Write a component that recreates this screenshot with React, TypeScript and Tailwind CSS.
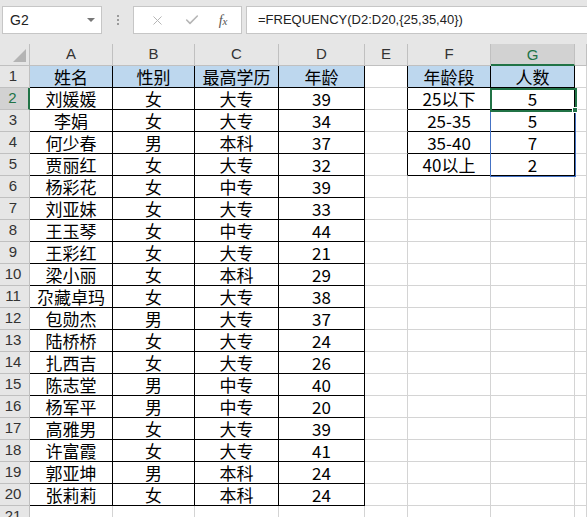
import { X, Check } from 'lucide-react';

const COLS = ['A', 'B', 'C', 'D', 'E', 'F', 'G', ''];

const people: [string, string, string, number][] = [
  ['刘媛媛', '女', '大专', 39],
  ['李娟', '女', '大专', 34],
  ['何少春', '男', '本科', 37],
  ['贾丽红', '女', '大专', 32],
  ['杨彩花', '女', '中专', 39],
  ['刘亚妹', '女', '大专', 33],
  ['王玉琴', '女', '中专', 44],
  ['王彩红', '女', '大专', 21],
  ['梁小丽', '女', '本科', 29],
  ['尕藏卓玛', '女', '大专', 38],
  ['包勋杰', '男', '大专', 37],
  ['陆桥桥', '女', '大专', 24],
  ['扎西吉', '女', '大专', 26],
  ['陈志堂', '男', '中专', 40],
  ['杨军平', '男', '中专', 20],
  ['高雅男', '女', '大专', 39],
  ['许富霞', '女', '大专', 41],
  ['郭亚坤', '男', '本科', 24],
  ['张莉莉', '女', '本科', 24],
];

const bands: [string, string][] = [
  ['年龄段', '人数'],
  ['25以下', '5'],
  ['25-35', '5'],
  ['35-40', '7'],
  ['40以上', '2'],
];

// value of a cell, row 1..21, col 0..7
function cellValue(r: number, c: number): string {
  if (r === 1) {
    if (c === 0) return '姓名';
    if (c === 1) return '性别';
    if (c === 2) return '最高学历';
    if (c === 3) return '年龄';
  } else if (r <= 20 && c <= 3) {
    const p = people[r - 2];
    return String(p[c]);
  }
  if (r <= 5 && (c === 5 || c === 6)) return bands[r - 1][c - 5];
  return '';
}

const inTable = (r: number, c: number) =>
  (r >= 1 && r <= 20 && c >= 0 && c <= 3) || (r >= 1 && r <= 5 && (c === 5 || c === 6));

function Cell({ r, c }: { r: number; c: number }) {
  const right = inTable(r, c) || inTable(r, c + 1);
  const bottom = inTable(r, c) || inTable(r + 1, c);
  const header = r === 1 && inTable(r, c);
  return (
    <div
      className={[
        'flex items-center justify-center h-[22px] border-r border-b text-[17px] leading-[20px] text-black whitespace-nowrap',
        right ? 'border-r-black' : 'border-r-[#d4d4d4]',
        bottom ? 'border-b-black' : 'border-b-[#d4d4d4]',
        header ? 'bg-[#bdd7ee]' : 'bg-white',
      ].join(' ')}
    >
      {cellValue(r, c)}
    </div>
  );
}

function FormulaBar() {
  return (
    <div className="h-[44px] bg-[#e6e6e6] flex items-start pt-[6px] font-['Liberation_Sans',sans-serif]">
      <div className="ml-[2px] w-[100px] h-[28px] bg-white border border-[#c6c6c6] flex items-center justify-between pl-[7px] pr-[6px]">
        <span className="text-[14px] text-[#222]">G2</span>
        <span className="w-0 h-0 border-l-[4px] border-r-[4px] border-t-[4px] border-l-transparent border-r-transparent border-t-[#777]" />
      </div>
      <div className="w-[31px] h-[28px] flex flex-col items-center justify-center gap-[2px]">
        <span className="w-[2px] h-[2px] bg-[#9a9a9a]" />
        <span className="w-[2px] h-[2px] bg-[#9a9a9a]" />
        <span className="w-[2px] h-[2px] bg-[#9a9a9a]" />
      </div>
      <div className="w-[109px] h-[28px] bg-white border border-[#c6c6c6] flex items-center justify-around pl-[6px] pr-[4px]">
        <X size={15} strokeWidth={1.6} className="text-[#b6b6b6]" />
        <Check size={16} strokeWidth={2.4} className="text-[#b6b6b6]" />
        <span className="font-['Liberation_Serif',serif] italic text-[14px] text-[#555]">
          f<span className="text-[11px]">x</span>
        </span>
      </div>
      <div className="ml-[4px] flex-1 h-[28px] bg-white border border-[#c6c6c6] border-r-0 flex items-center pl-[11px] text-[13px] text-[#222]">
        =FREQUENCY(D2:D20,{'{'}25,35,40{'}'})
      </div>
    </div>
  );
}

export default function App() {
  const rows = Array.from({ length: 21 }, (_, i) => i + 1);
  return (
    <div className="w-[587px] h-[517px] overflow-hidden bg-white font-['Noto_Sans_CJK_SC',sans-serif]">
      <FormulaBar />
      <div className="relative grid grid-cols-[30px_83px_82px_84px_86px_43px_83px_84px_1fr]">
        {/* select-all corner */}
        <div className="relative h-[22px] bg-[#e6e6e6] border-r border-b border-[#c0c0c0]">
          <svg className="absolute right-[3px] bottom-[3px]" width="13" height="13" viewBox="0 0 13 13">
            <polygon points="13,0 13,13 0,13" fill="#b4b4b4" />
          </svg>
        </div>
        {COLS.map((l, i) => (
          <div
            key={i}
            className={
              l === 'G'
                ? "h-[22px] bg-[#d2d2d2] border-r border-[#c0c0c0] border-b-2 border-b-[#217346] flex items-center justify-center text-[15px] text-[#217346] font-['Liberation_Sans',sans-serif] pt-[2px]"
                : "h-[22px] bg-[#e6e6e6] border-r border-b border-[#c0c0c0] flex items-center justify-center text-[15px] text-[#333] font-['Liberation_Sans',sans-serif]"
            }
          >
            {l}
          </div>
        ))}
        {rows.map((r) => (
          <div key={r} className="contents">
            <div
              className={
                r === 2
                  ? "h-[22px] bg-[#d2d2d2] border-b border-[#c0c0c0] border-r-2 border-r-[#217346] flex items-center justify-center pr-[3px] text-[15px] text-[#217346] font-['Liberation_Sans',sans-serif]"
                  : "h-[22px] bg-[#e6e6e6] border-r border-b border-[#c0c0c0] flex items-center justify-center pr-[3px] text-[15px] text-[#333] font-['Liberation_Sans',sans-serif]"
              }
            >
              {r}
            </div>
            {COLS.map((_, c) => (
              <Cell key={c} r={r} c={c} />
            ))}
          </div>
        ))}
        {/* array range highlight G2:G5 */}
        <div className="absolute left-[490px] top-[44px] w-[86px] h-[89px] border border-[#4472c4] pointer-events-none" />
        {/* active cell G2 */}
        <div className="absolute left-[490px] top-[44px] w-[87px] h-[24px] border-2 border-[#217346] pointer-events-none" />
        <div className="absolute left-[572px] top-[63px] w-[6px] h-[6px] bg-[#217346] border border-white pointer-events-none" />
      </div>
    </div>
  );
}
